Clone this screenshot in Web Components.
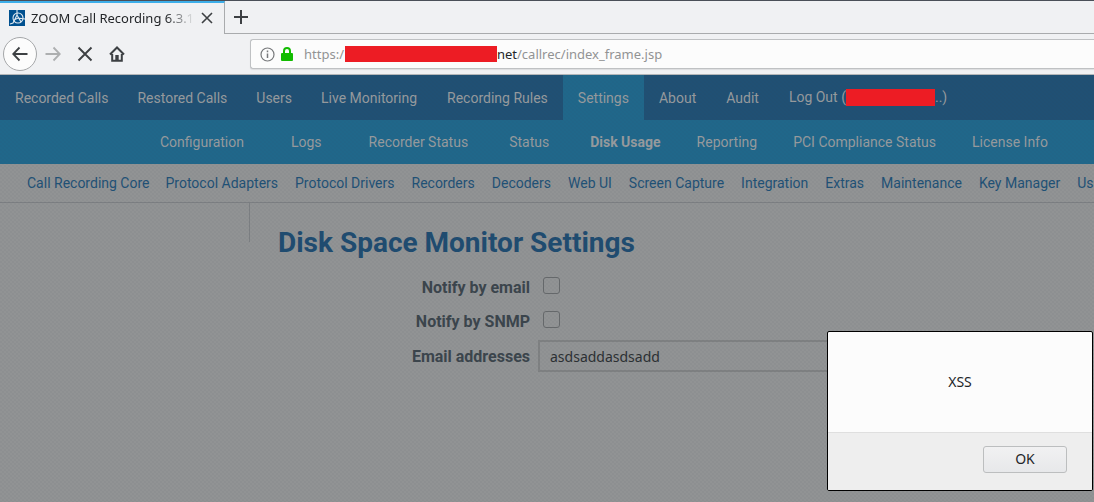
<!DOCTYPE html>
<html lang="en">
<head>
<meta charset="utf-8">
<title>ZOOM Call Recording 6.3.1</title>
<style>
html, body { margin: 0; height: 100%; }
body { font-family: Roboto, "Liberation Sans", sans-serif; overflow: hidden; background: #8f9192; }
</style>
</head>
<body>
<browser-window>
  <browser-tabs slot="chrome">ZOOM Call Recording 6.3.1</browser-tabs>
  <browser-toolbar slot="chrome"></browser-toolbar>
  <main-nav>
    <nav-link>Recorded Calls</nav-link><nav-link>Restored Calls</nav-link><nav-link>Users</nav-link><nav-link>Live Monitoring</nav-link><nav-link>Recording Rules</nav-link><nav-link active>Settings</nav-link><nav-link>About</nav-link><nav-link>Audit</nav-link><nav-link>Log Out (<redacted-text></redacted-text>..)</nav-link>
  </main-nav>
  <sub-nav>
    <nav-link>Configuration</nav-link><nav-link>Logs</nav-link><nav-link>Recorder Status</nav-link><nav-link>Status</nav-link><nav-link active>Disk Usage</nav-link><nav-link>Reporting</nav-link><nav-link>PCI Compliance Status</nav-link><nav-link>License Info</nav-link>
  </sub-nav>
  <section-nav>
    <nav-link>Call Recording Core</nav-link><nav-link>Protocol Adapters</nav-link><nav-link>Protocol Drivers</nav-link><nav-link>Recorders</nav-link><nav-link>Decoders</nav-link><nav-link>Web UI</nav-link><nav-link>Screen Capture</nav-link><nav-link>Integration</nav-link><nav-link>Extras</nav-link><nav-link>Maintenance</nav-link><nav-link>Key Manager</nav-link><nav-link>Us</nav-link>
  </section-nav>
  <disk-settings></disk-settings>
  <alert-dialog slot="dialog">XSS</alert-dialog>
</browser-window>
<script>
function define(name, html) {
  const t = document.createElement('template');
  t.innerHTML = html;
  customElements.define(name, class extends HTMLElement {
    constructor() {
      super();
      this.attachShadow({ mode: 'open' }).append(t.content.cloneNode(true));
    }
  });
}

define('browser-window', `
<style>
:host { display: flex; flex-direction: column; height: 100%; position: relative; overflow: hidden; }
.page { flex: 1; position: relative; background: #919394; overflow: hidden; }
/* fine checkered veil of the modal backdrop */
.page::after { content: ""; position: absolute; inset: 0; pointer-events: none;
  background: conic-gradient(rgba(50,60,75,.04) 25%, transparent 0 50%, rgba(50,60,75,.04) 0 75%, transparent 0) 0 0 / 4px 4px; }
</style>
<slot name="chrome"></slot>
<div class="page"><slot></slot></div>
<slot name="dialog"></slot>`);

define('browser-tabs', `
<style>
:host { display: flex; height: 34px; box-sizing: border-box; background: #f0f1f3; border-top: 1px solid #4a4f58; font: 13px/32px "Noto Sans", sans-serif; color: #232629; }
.tab { display: flex; align-items: center; box-sizing: border-box; width: 225px; padding: 0 11px 2px 9px; border-top: 2px solid #3daee9; border-right: 1px solid #a9abad; }
.title { flex: 1; margin: 0 6px; white-space: nowrap; overflow: hidden;
  mask-image: linear-gradient(90deg, #000 82%, transparent); }
svg { display: block; flex: none; }
button { border: 0; padding: 0; background: none; color: inherit; }
.rest { flex: 1; display: flex; align-items: center; padding-left: 8px; border-bottom: 1px solid #a9abad; }
</style>
<div class="tab">
  <svg width="16" height="16" viewBox="0 0 16 16"><path fill="#00508f" d="M0 0h16v16H0z"/><g fill="none" stroke="#dfe9f1" stroke-width="1.1"><circle cx="9" cy="8" r="5"/><path d="M8 0v5l4 7M8 5 4 13l-3 1M5 10l4-2 7 1"/></g></svg>
  <div class="title"><slot></slot></div>
  <button aria-label="Close tab"><svg width="12" height="12" viewBox="0 0 12 12"><path d="m1 1 10 10M11 1 1 11" stroke="#3d4043" stroke-width="1.6"/></svg></button>
</div>
<div class="rest"><button aria-label="New tab"><svg width="16" height="16" viewBox="0 0 16 16"><path d="M8 1v14M1 8h14" stroke="#3d4043" stroke-width="2"/></svg></button></div>`);

define('browser-toolbar', `
<style>
:host { display: flex; align-items: center; box-sizing: border-box; height: 41px; padding-left: 3px; background: #f0f1f3; border-bottom: 1px solid #b4b6b8; font: 13px/28px "Noto Sans", sans-serif; }
svg { display: block; flex: none; }
button { display: grid; place-items: center; border: 0; padding: 0; width: 32px; height: 32px; background: none; }
.back { width: 34px; height: 34px; box-sizing: border-box; border: 1px solid #a5a7a9; border-radius: 50%; background: #fcfcfc; }
.address { flex: 1; display: flex; align-items: center; height: 30px; box-sizing: border-box; margin-left: 117px; padding-left: 9px; border: 1px solid #bfc1c3; border-right: 0; border-radius: 3px 0 0 3px; background: #fcfcfc; color: #929394; box-shadow: 0 1px 1px #dcdddf; white-space: nowrap; }
.lock { margin: 0 11px 0 6px; }
b { font-weight: 400; color: #232629; }
i { width: 152px; height: 16px; margin-left: 1px; background: #ed1c24; }
</style>
<button class="back" aria-label="Back"><svg width="16" height="16" viewBox="0 0 16 16"><path d="M15.500 8H1.500M7.500 1.500 1.200 8l6.300 6.500" fill="none" stroke="#3d4043" stroke-width="1.800"/></svg></button>
<button aria-label="Forward"><svg width="16" height="16" viewBox="0 0 16 16"><path d="M.5 8h14M8.500 1.500 14.800 8l-6.300 6.500" fill="none" stroke="#adafb0" stroke-width="1.800"/></svg></button>
<button aria-label="Stop"><svg width="16" height="16" viewBox="0 0 16 16"><path d="m1.500 1.500 13 13m0-13-13 13" stroke="#3d4043" stroke-width="1.900"/></svg></button>
<button aria-label="Home"><svg width="16" height="16" viewBox="0 0 16 16"><path d="M1 8.500 8 1.500l7 7M3.200 8v6.800h9.600V8" fill="none" stroke="#3d4043" stroke-width="2"/><path d="M6.300 9h3.400v6H6.300z" fill="#3d4043"/></svg></button>
<div class="address">
  <svg width="15" height="15" viewBox="0 0 15 15"><circle cx="7.500" cy="7.500" r="6.500" fill="none" stroke="#77797b" stroke-width="1.200"/><path d="M7.500 6.500V11M7.500 3.500v1.700" stroke="#77797b" stroke-width="1.500"/></svg>
  <svg class="lock" width="12" height="14" viewBox="0 0 12 14"><path d="M3 7V4a3 3 0 0 1 6 0v3" fill="none" stroke="#12bc00" stroke-width="2"/><rect y="6" width="12" height="8" rx="1" fill="#12bc00"/></svg>
  <span>https:/</span><i></i><b>net</b><span>/callrec/index_frame.jsp</span>
</div>`);

define('redacted-text', `<style>:host { display: inline-block; width: 89px; height: 17px; background: #ed1c24; vertical-align: -4px; position: relative; z-index: 1; }</style>`);

define('nav-link', `
<style>
:host { display: flex; align-items: center; padding: 0 var(--link-pad, 0); }
:host([active]) { background: var(--active-bg, none); font-weight: var(--active-weight, 400); }
a { color: inherit; text-decoration: none; white-space: nowrap; }
</style><a href="#"><slot></slot></a>`);

define('main-nav', `<style>
:host { display: flex; height: 45px; background: #205074; color: #979b9e; font-size: 14px; --link-pad: 15px; --active-bg: #20678a; }
::slotted(:nth-child(-n+3)) { margin-right: -1px; }
</style><slot></slot>`);
define('sub-nav', `<style>
:host { display: flex; gap: 36px; height: 44px; box-sizing: border-box; padding-left: 160px; background: #20678a; color: #979b9e; font-size: 14px; --active-weight: 700; }
::slotted(:nth-child(-n+4)) { margin-right: 5px; }
::slotted(:nth-child(-n+2)) { margin-right: 11px; }
</style><slot></slot>`);
define('section-nav', `<style>:host { display: flex; gap: 17px; height: 39px; box-sizing: border-box; padding-left: 27px; border-bottom: 1px solid #7c7f82; color: #1f5176; font-size: 14px; }
::slotted(:first-child) { margin-right: -1px; }
</style><slot></slot>`);

define('disk-settings', `
<style>
:host { display: grid; grid-template-columns: 250px 1fr; }
aside { height: 39px; border-right: 1px solid #7c7f82; }
main { padding: 24px 0 0 28px; }
h1 { margin: 0 0 11px; font-size: 28px; line-height: 32px; font-weight: 700; color: #1f4c70; }
form { display: grid; grid-template-columns: 252px 1fr; column-gap: 8px; grid-template-rows: 34px 34px 36px; align-items: center; }
label { text-align: right; font-size: 16px; font-weight: 700; color: #3b454c; }
input { box-sizing: border-box; margin: 0; }
input[type=checkbox] { appearance: none; width: 17px; height: 17px; margin: 0 0 3px 5px; border: 1px solid #66696b; border-radius: 3px; }
input[type=text] { width: 400px; height: 32px; border: 2px solid #7f8182; background: transparent; padding: 0 10px; font: 14px "Noto Sans", sans-serif; color: #2c3033; }
</style>
<aside></aside>
<main>
  <h1>Disk Space Monitor Settings</h1>
  <form>
    <label for="email">Notify by email</label><input id="email" type="checkbox">
    <label for="snmp">Notify by SNMP</label><input id="snmp" type="checkbox">
    <label for="addresses">Email addresses</label><input id="addresses" type="text" value="asdsaddasdsadd">
  </form>
</main>`);

define('alert-dialog', `
<style>
:host { position: absolute; right: 1px; bottom: 11px; width: 266px; box-sizing: border-box; border: 1px solid #000; border-radius: 2px; overflow: hidden; background: #fcfcfc; color: #232629; font: 14px/18px "Noto Sans", sans-serif; }
.message { display: grid; place-items: center; height: 100px; }
footer { display: flex; justify-content: flex-end; padding: 13px 25px 17px; background: #eee; border-top: 1px solid #dfdfdf; }
button { width: 84px; height: 27px; padding: 0 0 2px; border: 1px solid #bcbebf; border-radius: 3px; background: linear-gradient(#f1f1f2, #e7e8ea); font: inherit; color: inherit; }
</style>
<div class="message" role="alertdialog"><slot></slot></div>
<footer><button>OK</button></footer>`);
</script>
</body>
</html>
